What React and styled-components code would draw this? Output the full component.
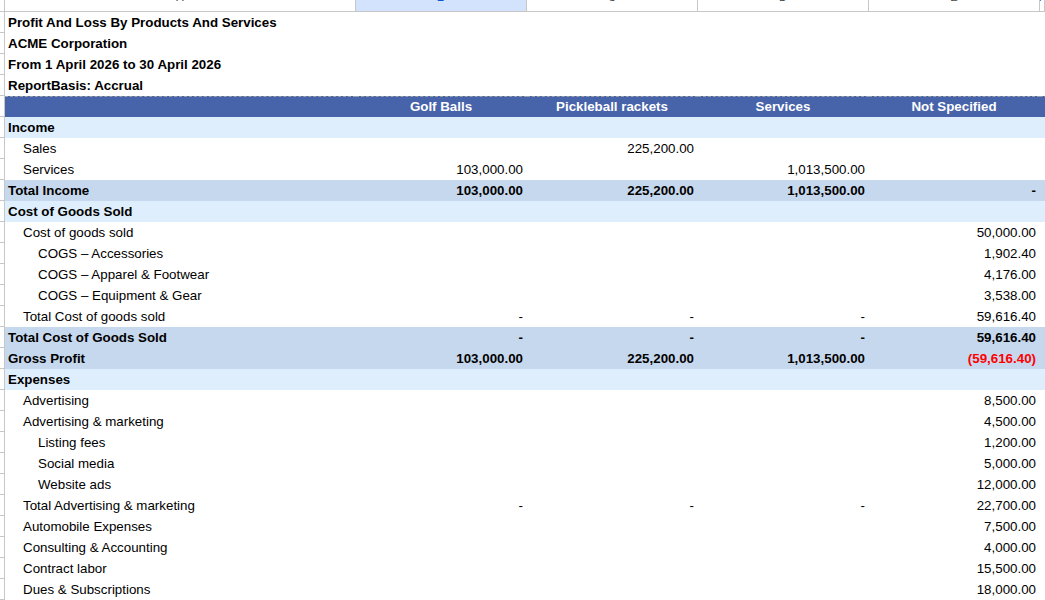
import styled, { createGlobalStyle } from 'styled-components';

const GlobalStyle = createGlobalStyle`
  html, body {
    margin: 0;
    padding: 0;
    background: #ffffff;
    overflow: hidden;
  }
  body {
    font-family: "Liberation Sans", Arial, sans-serif;
  }
`;

const COLS = '5px 351px 171px 171px 171px 171px 1fr';

const Sheet = styled.div`
  width: 1045px;
  height: 600px;
  overflow: hidden;
  background: #ffffff;
`;

const ColumnHeader = styled.div`
  display: grid;
  grid-template-columns: ${COLS};
  height: 12px;
`;

const Corner = styled.div`
  border-right: 1px solid #c7c7c7;
  border-bottom: 1px solid #c7c7c7;
  background: #ffffff;
`;

const ColLetter = styled.div`
  display: flex;
  align-items: flex-end;
  justify-content: center;
  overflow: hidden;
  border-right: 1px solid #c7c7c7;
  border-bottom: 1px solid #c7c7c7;
  background: ${(p) => (p.$selected ? '#d3e3fd' : '#ffffff')};
  color: ${(p) => (p.$selected ? '#0b57d0' : '#444746')};
  font-family: "Liberation Sans", Arial, sans-serif;
  font-size: 11px;
  font-weight: ${(p) => (p.$selected ? 700 : 400)};

  span {
    line-height: 1;
    margin-bottom: 8px;
  }
`;

const bgFor = {
  head: '#4763a9',
  section: '#deeefc',
  total: '#c6d8ed',
};

const Row = styled.div`
  display: grid;
  grid-template-columns: ${COLS};
  height: 21px;
`;

const RowNum = styled.div`
  border-right: 1px solid #c7c7c7;
  border-bottom: 1px solid #c7c7c7;
  background: #ffffff;
  ${(p) => p.$dashed && 'border-top: 1px dashed #9aa0a6;'}
`;

const Cell = styled.div`
  box-sizing: border-box;
  height: 21px;
  line-height: 21px;
  white-space: nowrap;
  overflow: visible;
  font-size: 13.33px;
  color: ${(p) => (p.$head ? '#ffffff' : p.$neg ? '#ff0000' : '#000000')};
  font-weight: ${(p) => (p.$bold ? 700 : 400)};
  background: ${(p) => bgFor[p.$kind] || 'transparent'};
  text-align: ${(p) => p.$align || 'left'};
  padding: 0 4px 0 ${(p) => 3 + (p.$level || 0) * 15}px;
  ${(p) => p.$dashed && 'border-top: 1px dashed #9aa0a6; line-height: 19px;'}
`;

const titles = [
  'Profit And Loss By Products And Services',
  'ACME Corporation',
  'From 1 April 2026 to 30 April 2026',
  'ReportBasis: Accrual',
];

const heads = ['Golf Balls', 'Pickleball rackets', 'Services', 'Not Specified'];

const rows = [
  { label: 'Income', kind: 'section' },
  { label: 'Sales', level: 1, v: ['', '225,200.00', '', ''] },
  { label: 'Services', level: 1, v: ['103,000.00', '', '1,013,500.00', ''] },
  { label: 'Total Income', kind: 'total', v: ['103,000.00', '225,200.00', '1,013,500.00', '-'] },
  { label: 'Cost of Goods Sold', kind: 'section' },
  { label: 'Cost of goods sold', level: 1, v: ['', '', '', '50,000.00'] },
  { label: 'COGS – Accessories', level: 2, v: ['', '', '', '1,902.40'] },
  { label: 'COGS – Apparel & Footwear', level: 2, v: ['', '', '', '4,176.00'] },
  { label: 'COGS – Equipment & Gear', level: 2, v: ['', '', '', '3,538.00'] },
  { label: 'Total Cost of goods sold', level: 1, v: ['-', '-', '-', '59,616.40'] },
  { label: 'Total Cost of Goods Sold', kind: 'total', v: ['-', '-', '-', '59,616.40'] },
  { label: 'Gross Profit', kind: 'total', v: ['103,000.00', '225,200.00', '1,013,500.00', '(59,616.40)'], neg: 3 },
  { label: 'Expenses', kind: 'section' },
  { label: 'Advertising', level: 1, v: ['', '', '', '8,500.00'] },
  { label: 'Advertising & marketing', level: 1, v: ['', '', '', '4,500.00'] },
  { label: 'Listing fees', level: 2, v: ['', '', '', '1,200.00'] },
  { label: 'Social media', level: 2, v: ['', '', '', '5,000.00'] },
  { label: 'Website ads', level: 2, v: ['', '', '', '12,000.00'] },
  { label: 'Total Advertising & marketing', level: 1, v: ['-', '-', '-', '22,700.00'] },
  { label: 'Automobile Expenses', level: 1, v: ['', '', '', '7,500.00'] },
  { label: 'Consulting & Accounting', level: 1, v: ['', '', '', '4,000.00'] },
  { label: 'Contract labor', level: 1, v: ['', '', '', '15,500.00'] },
  { label: 'Dues & Subscriptions', level: 1, v: ['', '', '', '18,000.00'] },
];

const App = () => {
  return (
    <>
      <GlobalStyle />
      <Sheet>
        <ColumnHeader>
          <Corner />
          {['A', 'B', 'C', 'D', 'E', 'F'].map((l) => (
            <ColLetter key={l} $selected={l === 'B'}>
              <span>{l}</span>
            </ColLetter>
          ))}
        </ColumnHeader>

        {titles.map((t) => (
          <Row key={t}>
            <RowNum />
            <Cell $bold>{t}</Cell>
          </Row>
        ))}

        <Row>
          <RowNum />
          <Cell $kind="head" $dashed />
          {heads.map((h) => (
            <Cell key={h} $kind="head" $head $bold $dashed $align="center">
              {h}
            </Cell>
          ))}
          <Cell $kind="head" $dashed />
        </Row>

        {rows.map((r) => {
          const bold = r.kind === 'section' || r.kind === 'total';
          const vals = r.v || ['', '', '', ''];
          return (
            <Row key={r.label}>
              <RowNum />
              <Cell $kind={r.kind} $bold={bold} $level={r.level}>
                {r.label}
              </Cell>
              {vals.map((v, i) => (
                <Cell key={i} $kind={r.kind} $bold={bold} $align="right" $neg={r.neg === i}>
                  {v}
                </Cell>
              ))}
              <Cell $kind={r.kind} />
            </Row>
          );
        })}
      </Sheet>
    </>
  );
};

export default App;
